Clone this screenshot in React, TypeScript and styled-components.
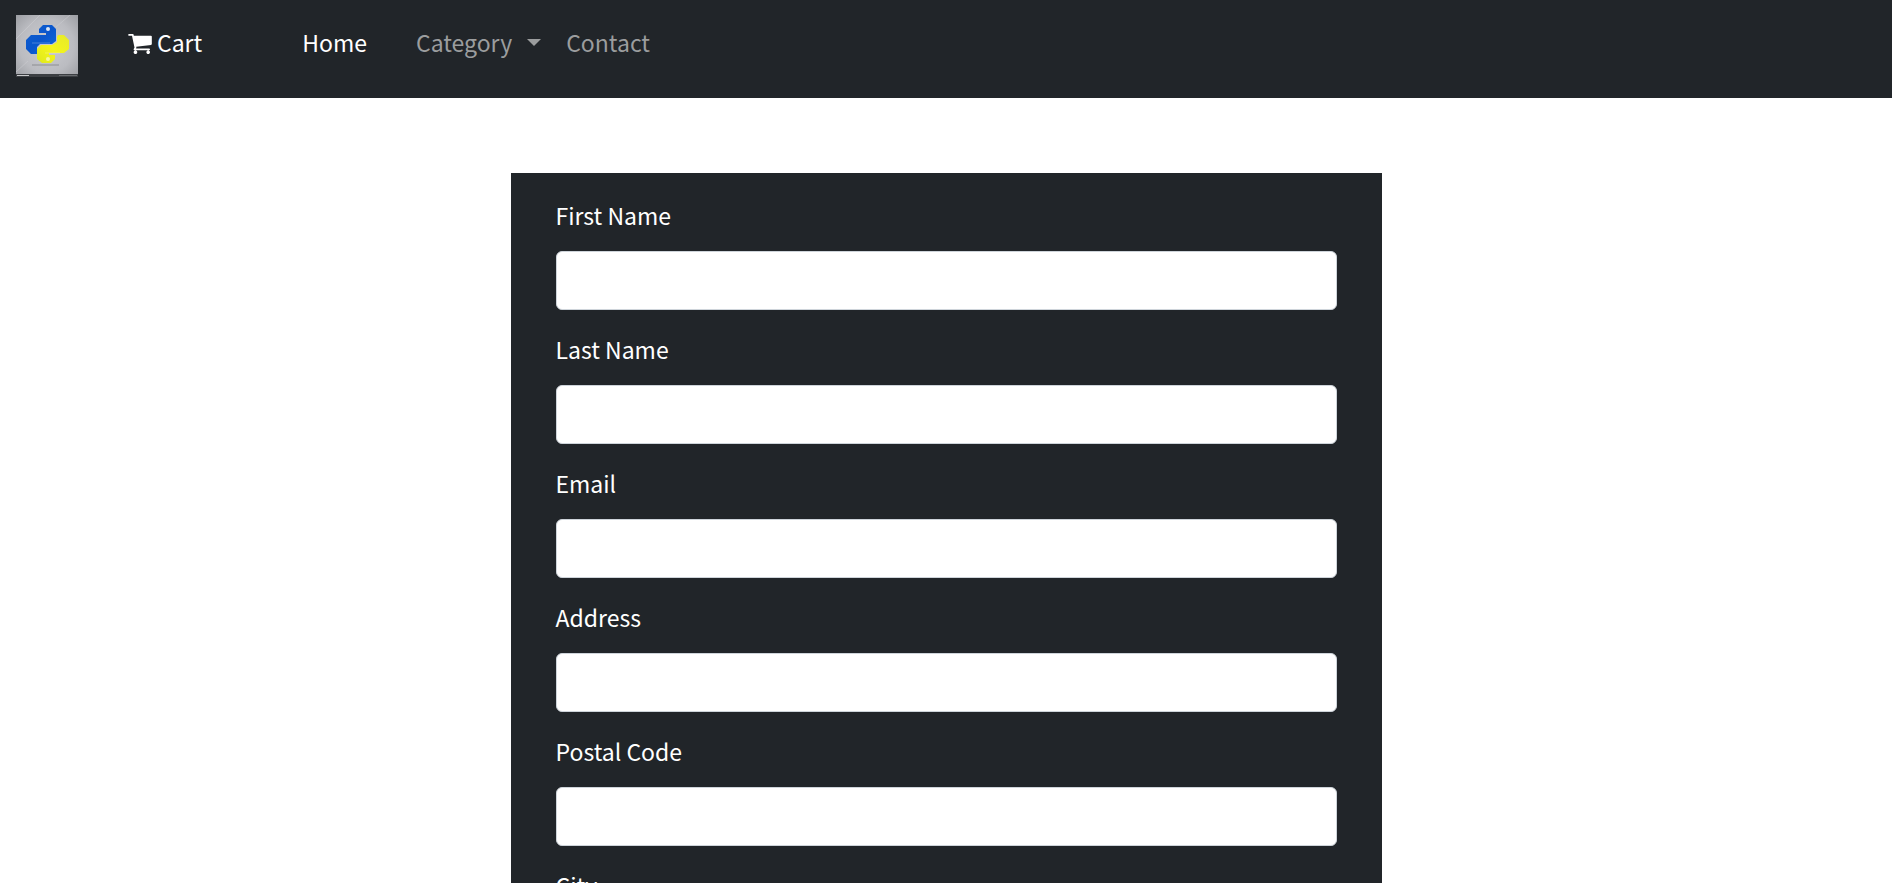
import React from "react";
import styled, { createGlobalStyle } from "styled-components";

const GlobalStyle = createGlobalStyle`
  *, *::before, *::after { box-sizing: border-box; }
  body {
    margin: 0;
    background: #fff;
    color: #fff;
    font-family: "Noto Sans CJK SC", "Noto Sans", sans-serif;
    font-size: 23px;
    line-height: 36px;
  }
`;

const Navbar = styled.nav`
  display: flex;
  align-items: flex-start;
  padding: 15px 16px 21px;
  background: #212529;
`;

const Brand = styled.a`
  display: block;
  width: 62px;
  height: 62px;
`;

const NavList = styled.ul`
  display: flex;
  gap: 25px;
  margin: 0;
  padding: 9px 0 0;
  list-style: none;
`;

const NavLink = styled.a<{ $active?: boolean }>`
  display: flex;
  align-items: center;
  color: ${(p) => (p.$active ? "#fff" : "#9b9d9e")};
  text-decoration: none;
`;

const CartLink = styled(NavLink)`
  gap: 5px;
  margin: 9px 100px 0 50px;

  svg {
    margin-top: 4px;
  }
`;

const HomeItem = styled.li`
  margin-right: 24px;
`;

const DropdownToggle = styled.button`
  display: flex;
  align-items: center;
  gap: 15px;
  padding: 0;
  border: 0;
  background: none;
  color: #9b9d9e;
  font: inherit;
  cursor: pointer;
`;

const Caret = styled.span`
  border-top: 7px solid;
  border-right: 7px solid transparent;
  border-left: 7px solid transparent;
`;

const CheckoutForm = styled.form`
  max-width: 871px;
  margin: 75px auto 0;
  padding: 24px 45px;
  background: #212529;
`;

const Field = styled.div`
  display: flex;
  flex-direction: column;
  gap: 18px;
  margin-bottom: 21px;
`;

const Input = styled.input`
  width: 100%;
  height: 59px;
  padding: 9px 18px;
  border: 1px solid #ced4da;
  border-radius: 6px;
  background: #fff;
  color: #212529;
  font: inherit;
`;

const fields = [
  { id: "first-name", label: "First Name", type: "text" },
  { id: "last-name", label: "Last Name", type: "text" },
  { id: "email", label: "Email", type: "email" },
  { id: "address", label: "Address", type: "text" },
  { id: "postal-code", label: "Postal Code", type: "text" },
  { id: "city", label: "City", type: "text" },
];

function Logo() {
  return (
    <svg width="62" height="62" viewBox="0 0 62 62" role="img" aria-label="Python">
      <defs>
        <radialGradient id="plate" cx="50%" cy="50%" r="72%">
          <stop offset="0" stopColor="#cbccd0" />
          <stop offset="0.6" stopColor="#bbbcc1" />
          <stop offset="1" stopColor="#9a9ca1" />
        </radialGradient>
        <linearGradient id="blue" x1="0" y1="0" x2="1" y2="1">
          <stop offset="0" stopColor="#0f5fd0" />
          <stop offset="0.5" stopColor="#0a56cc" />
          <stop offset="1" stopColor="#0d6ae0" />
        </linearGradient>
        <linearGradient id="yellow" x1="1" y1="0" x2="0" y2="1">
          <stop offset="0" stopColor="#e6e92a" />
          <stop offset="0.5" stopColor="#f4f51c" />
          <stop offset="1" stopColor="#dfe81c" />
        </linearGradient>
      </defs>
      <rect width="62" height="62" fill="url(#plate)" />
      <path d="M0 24 24 0M0 57 12 46M40 12 54 0" stroke="#cfd0d4" opacity="0.5" />
      <path d="M16 50h27" stroke="#8d8e92" />
      <path
        d="M27 10h9l4 4v12l-4 3H24l-3 3v7h-6l-5-5v-9l5-5h15v-2h-7v-4z"
        fill="url(#blue)"
      />
      <path
        d="M42 20h6l5 5v9l-5 4H33v2h6v4l-4 4h-9l-5-4V34l4-4h11l5-3v-5z"
        fill="url(#yellow)"
      />
      <path d="M16 28h18M29 38h15" stroke="#fff" opacity="0.25" />
      <circle cx="32" cy="14" r="2" fill="#dbe6f5" />
      <circle cx="32" cy="44" r="2" fill="#f5f6a0" />
      <rect y="59" width="62" height="3" fill="#3c3f43" />
      <path d="M1 60.500h12" stroke="#c8c9cb" />
      <path d="M43 60.500h18" stroke="#686b6e" />
    </svg>
  );
}

function CartIcon() {
  return (
    <svg width="24" height="20" viewBox="0 256 1664 1408" fill="currentColor" aria-hidden="true">
      <path d="M640 1536q0 52-38 90t-90 38-90-38-38-90 38-90 90-38 90 38 38 90zm896 0q0 52-38 90t-90 38-90-38-38-90 38-90 90-38 90 38 38 90zm128-1088v512q0 24-16.500 42.500t-40.500 21.500l-1044 122q13 60 13 70 0 16-24 64h920q26 0 45 19t19 45-19 45-45 19h-1024q-26 0-45-19t-19-45q0-11 8-31.500t16-36 21.500-40 15.500-29.500l-177-823h-204q-26 0-45-19t-19-45 19-45 45-19h256q16 0 28.500 6.500t19.500 15.500 13 24.500 8 26 5.500 29.500 4.500 26h1201q26 0 45 19t19 45z" />
    </svg>
  );
}

export default function App() {
  return (
    <>
      <GlobalStyle />
      <Navbar>
        <Brand href="#">
          <Logo />
        </Brand>
        <CartLink href="#cart" $active>
          <CartIcon />
          Cart
        </CartLink>
        <NavList>
          <HomeItem>
            <NavLink href="#home" $active>Home</NavLink>
          </HomeItem>
          <li>
            <DropdownToggle type="button" aria-haspopup="true">
              Category
              <Caret />
            </DropdownToggle>
          </li>
          <li>
            <NavLink href="#contact">Contact</NavLink>
          </li>
        </NavList>
      </Navbar>
      <CheckoutForm>
        {fields.map((field) => (
          <Field key={field.id}>
            <label htmlFor={field.id}>{field.label}</label>
            <Input id={field.id} name={field.id} type={field.type} />
          </Field>
        ))}
      </CheckoutForm>
    </>
  );
}
